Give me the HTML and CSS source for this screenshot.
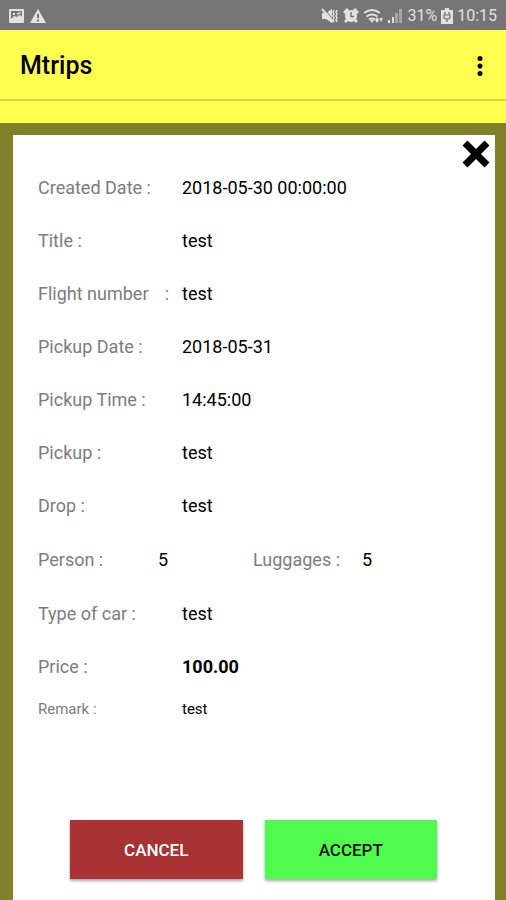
FILE: index.html
```html
<!DOCTYPE html>
<html lang="en">
<head>
<meta charset="utf-8">
<meta name="viewport" content="width=device-width, initial-scale=1">
<title>Mtrips</title>
<link rel="stylesheet" href="styles.css">
</head>
<body>
<div class="status">
  <div class="status-group">
    <svg width="16" height="16" viewBox="0 0 16 16" aria-hidden="true">
      <rect x="1" y="1" width="15" height="14" rx="1" fill="currentColor"/>
      <path fill="#757575" d="M3 3h11v5l-3-1-2 2-3-1-3 3z"/>
      <path fill="currentColor" d="M5 5h2v2H5zM9 5l4-1v1L9 7z"/>
    </svg>
    <svg width="16" height="16" viewBox="0 0 16 16" aria-hidden="true">
      <path fill="currentColor" fill-rule="evenodd" d="M8 1l8 14H0zM7 6v4h2V6zm0 5.500v2h2v-2z"/>
    </svg>
  </div>
  <div class="status-group status-right">
    <svg width="18" height="16" viewBox="0 0 18 16" aria-hidden="true">
      <path fill="currentColor" d="M1 5h4l6-4v14l-6-4H1z"/>
      <path stroke="#757575" stroke-width="1" d="M4 1l9 12"/>
      <path stroke="currentColor" stroke-width="2" d="M1 1l11 13"/>
      <path fill="none" stroke="currentColor" stroke-width="1.500" d="M13 2l-1 2 1 2-1 2 1 2-1 2 1 2M16 2l-1 2 1 2-1 2 1 2-1 2 1 2"/>
    </svg>
    <svg width="16" height="16" viewBox="0 0 16 16" aria-hidden="true">
      <circle cx="8" cy="8" r="6" fill="currentColor"/>
      <path fill="none" stroke="currentColor" stroke-width="3" d="M1 5l4-4M15 5l-4-4M4 12l-2 2M12 12l2 2"/>
      <path fill="none" stroke="#757575" stroke-width="1.500" d="M8 4v4.500h3"/>
    </svg>
    <svg width="20" height="16" viewBox="0 0 20 16" aria-hidden="true">
      <path fill="none" stroke="currentColor" stroke-width="2" d="M1 5q8-6 16 0M3.500 8.500q5.500-4 11 0M6 11.500q3-2 6 0"/>
      <path fill="currentColor" d="M7 12h4l-2 3zM12 12h4l-2-3zM12 12h4l-2 3zM16 10h4l-2 4z"/>
    </svg>
    <svg width="16" height="16" viewBox="0 0 16 16" aria-hidden="true">
      <path fill="currentColor" d="M1 12h2v3H1zM5 9h2v6H5z"/>
      <path fill="currentColor" fill-opacity=".45" d="M8 5h3v10H8zM12 1h3v14h-3z"/>
    </svg>
    <span>31%</span>
    <svg width="12" height="16" viewBox="0 0 12 16" aria-hidden="true">
      <path fill="currentColor" d="M4 0h4v2h4v14H0V2h4z"/>
      <path fill="none" stroke="#757575" stroke-width="1.200" d="M4 4v3M8 4v3M3 7h6v2q0 2-3 2T3 9zM6 11v3"/>
    </svg>
    <span>10:15</span>
  </div>
</div>
<header class="appbar">
  <h1>Mtrips</h1>
  <button class="icon-button" type="button" aria-label="More options">
    <svg width="8" height="22" viewBox="0 0 8 22" aria-hidden="true"><g fill="#000"><circle cx="4" cy="3.500" r="2.500"/><circle cx="4" cy="11" r="2.500"/><circle cx="4" cy="18.500" r="2.500"/></g></svg>
  </button>
</header>
<div class="strip"></div>
<main class="backdrop">
  <section class="card" aria-label="Trip details">
    <button class="icon-button close" type="button" aria-label="Close">
      <svg width="28" height="28" viewBox="0 0 28 28" aria-hidden="true"><path fill="none" stroke="#000" stroke-width="7" stroke-linejoin="round" d="M3 3l22 22M25 3L3 25"/></svg>
    </button>
    <dl class="details">
      <div class="row"><dt>Created Date :</dt><dd>2018-05-30 00:00:00</dd></div>
      <div class="row"><dt>Title :</dt><dd>test</dd></div>
      <div class="row"><dt class="spread"><span>Flight number</span><span>:</span></dt><dd>test</dd></div>
      <div class="row"><dt>Pickup Date :</dt><dd>2018-05-31</dd></div>
      <div class="row"><dt>Pickup Time :</dt><dd>14:45:00</dd></div>
      <div class="row"><dt>Pickup :</dt><dd>test</dd></div>
      <div class="row"><dt>Drop :</dt><dd>test</dd></div>
      <div class="row counts"><dt>Person :</dt><dd>5</dd><dt>Luggages :</dt><dd>5</dd></div>
      <div class="row"><dt>Type of car :</dt><dd>test</dd></div>
      <div class="row"><dt>Price :</dt><dd class="price">100.00</dd></div>
      <div class="row remark"><dt>Remark :</dt><dd>test</dd></div>
    </dl>
    <div class="actions">
      <button class="cancel" type="button">CANCEL</button>
      <button class="accept" type="button">ACCEPT</button>
    </div>
  </section>
</main>
</body>
</html>
```
FILE: styles.css
```css
* { box-sizing: border-box; }
body {
  margin: 0;
  min-height: 100vh;
  display: flex;
  flex-direction: column;
  background: #80802a;
  color: #000;
  font: 18px/24px Roboto, "Noto Sans", sans-serif;
}
button { border: 0; font: inherit; cursor: pointer; }
svg { display: block; flex: none; }

.status {
  display: flex;
  justify-content: space-between;
  align-items: center;
  height: 30px;
  padding: 2px 9px 0 8px;
  background: #757575;
  color: #e2e2e2;
  font-size: 16px;
}
.status-group { display: flex; align-items: center; gap: 6px; }
.status-right { gap: 4px; }

.appbar {
  display: flex;
  justify-content: space-between;
  align-items: center;
  height: 71px;
  padding: 2px 22px 0 20px;
  background: #ffff50;
  border-bottom: 2px solid #d8d844;
}
h1 { margin: 0; font-size: 25px; line-height: 32px; font-weight: 500; }
.icon-button { padding: 0; background: none; }
.strip { height: 22px; background: #ffff50; }

.backdrop {
  flex: 1;
  display: flex;
  flex-direction: column;
  padding: 12px 11px 0 13px;
}
.card {
  position: relative;
  flex: 1;
  display: flex;
  flex-direction: column;
  padding-top: 26px;
  background: #fff;
}
.close { position: absolute; top: 5px; right: 5px; }

.details { margin: 0; padding: 0 25px; }
.row {
  display: grid;
  grid-template-columns: 144px 1fr;
  align-items: center;
  height: 53px;
}
dt { color: #7c7c7c; }
dd { margin: 0; }
.spread { display: flex; justify-content: space-between; padding-right: 13px; }
.counts { grid-template-columns: 120px 95px 109px 1fr; height: 55px; }
.price { font-weight: 700; }
.remark { height: 32px; font-size: 15px; }

.actions {
  display: flex;
  gap: 22px;
  margin: 95px 58px 20px 57px;
}
.actions button {
  flex: 1;
  height: 59px;
  padding: 0;
  font-size: 17px;
  font-weight: 500;
  box-shadow: 0 2px 3px rgba(0, 0, 0, 0.35);
}
.actions .cancel { background: #a93235; color: #fff; }
.actions .accept { background: #50fb50; color: #111; }
```
